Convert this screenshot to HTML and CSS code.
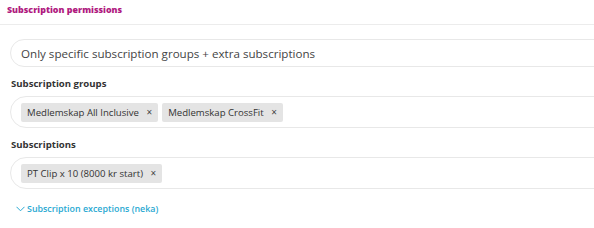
FILE: index.html
```html
<!DOCTYPE html>
<html>
<head>
<meta charset="utf-8">
<link rel="stylesheet" href="styles.css">
</head>
<body>
<div class="page">
  <div class="header"><span class="title">Subscription permissions</span></div>
  <div class="form">
    <div class="select">Only specific subscription groups + extra subscriptions</div>
    <div class="label">Subscription groups</div>
    <div class="multi">
      <span class="tag">Medlemskap All Inclusive <span class="x">×</span></span>
      <span class="tag">Medlemskap CrossFit <span class="x">×</span></span>
    </div>
    <div class="label">Subscriptions</div>
    <div class="multi">
      <span class="tag">PT Clip x 10 (8000 kr start) <span class="x">×</span></span>
    </div>
    <div class="link">
      <svg class="chev" width="9" height="6" viewBox="0 0 9 6"><path d="M0.5 0.8 L4.5 4.8 L8.5 0.8" fill="none" stroke="#29a9d2" stroke-width="1"/></svg>
      <span>Subscription exceptions (neka)</span>
    </div>
  </div>
</div>
</body>
</html>
```

FILE: styles.css
```css
html, body {
  margin: 0;
  padding: 0;
  background: #fff;
  overflow: hidden;
}
.page {
  width: 594px;
  height: 228px;
  overflow: hidden;
  font-family: "Open Sans", "DejaVu Sans", sans-serif;
}
.header {
  border-bottom: 1px solid #ececec;
  padding: 3px 0 0 7px;
  box-sizing: border-box;
  height: 25px;
}
.title {
  display: block;
  font-size: 8.9px;
  line-height: 14px;
  font-weight: 800;
  color: #b01a80;
}
.form {
  padding: 14px 0 0 10px;
}
.select {
  height: 28px;
  box-sizing: border-box;
  width: 640px;
  border: 1px solid #e8e8e8;
  border-radius: 14px;
  padding-left: 10px;
  display: flex;
  align-items: center;
  font-size: 11.6px;
  color: #444;
}
.label {
  margin: 10px 0 5px 1px;
  font-size: 9.6px;
  line-height: 14px;
  font-weight: 700;
  color: #333;
}
.multi {
  height: 32px;
  box-sizing: border-box;
  width: 640px;
  border: 1px solid #e8e8e8;
  border-radius: 16px;
  padding-left: 10px;
  display: flex;
  align-items: center;
  gap: 4px;
}
.tag {
  display: inline-flex;
  align-items: center;
  height: 19px;
  background: #e4e4e4;
  border-radius: 2px;
  padding: 0 6px;
  font-size: 9.6px;
  color: #333;
  white-space: pre;
}
.x {
  margin-left: 5px;
  font-size: 10px;
  color: #444;
}
.link {
  margin: 13px 0 0 6px;
  display: flex;
  align-items: center;
  gap: 2px;
  font-size: 8.9px;
  line-height: 14px;
  font-weight: 600;
  color: #29a9d2;
}
.chev {
  display: block;
}
```
